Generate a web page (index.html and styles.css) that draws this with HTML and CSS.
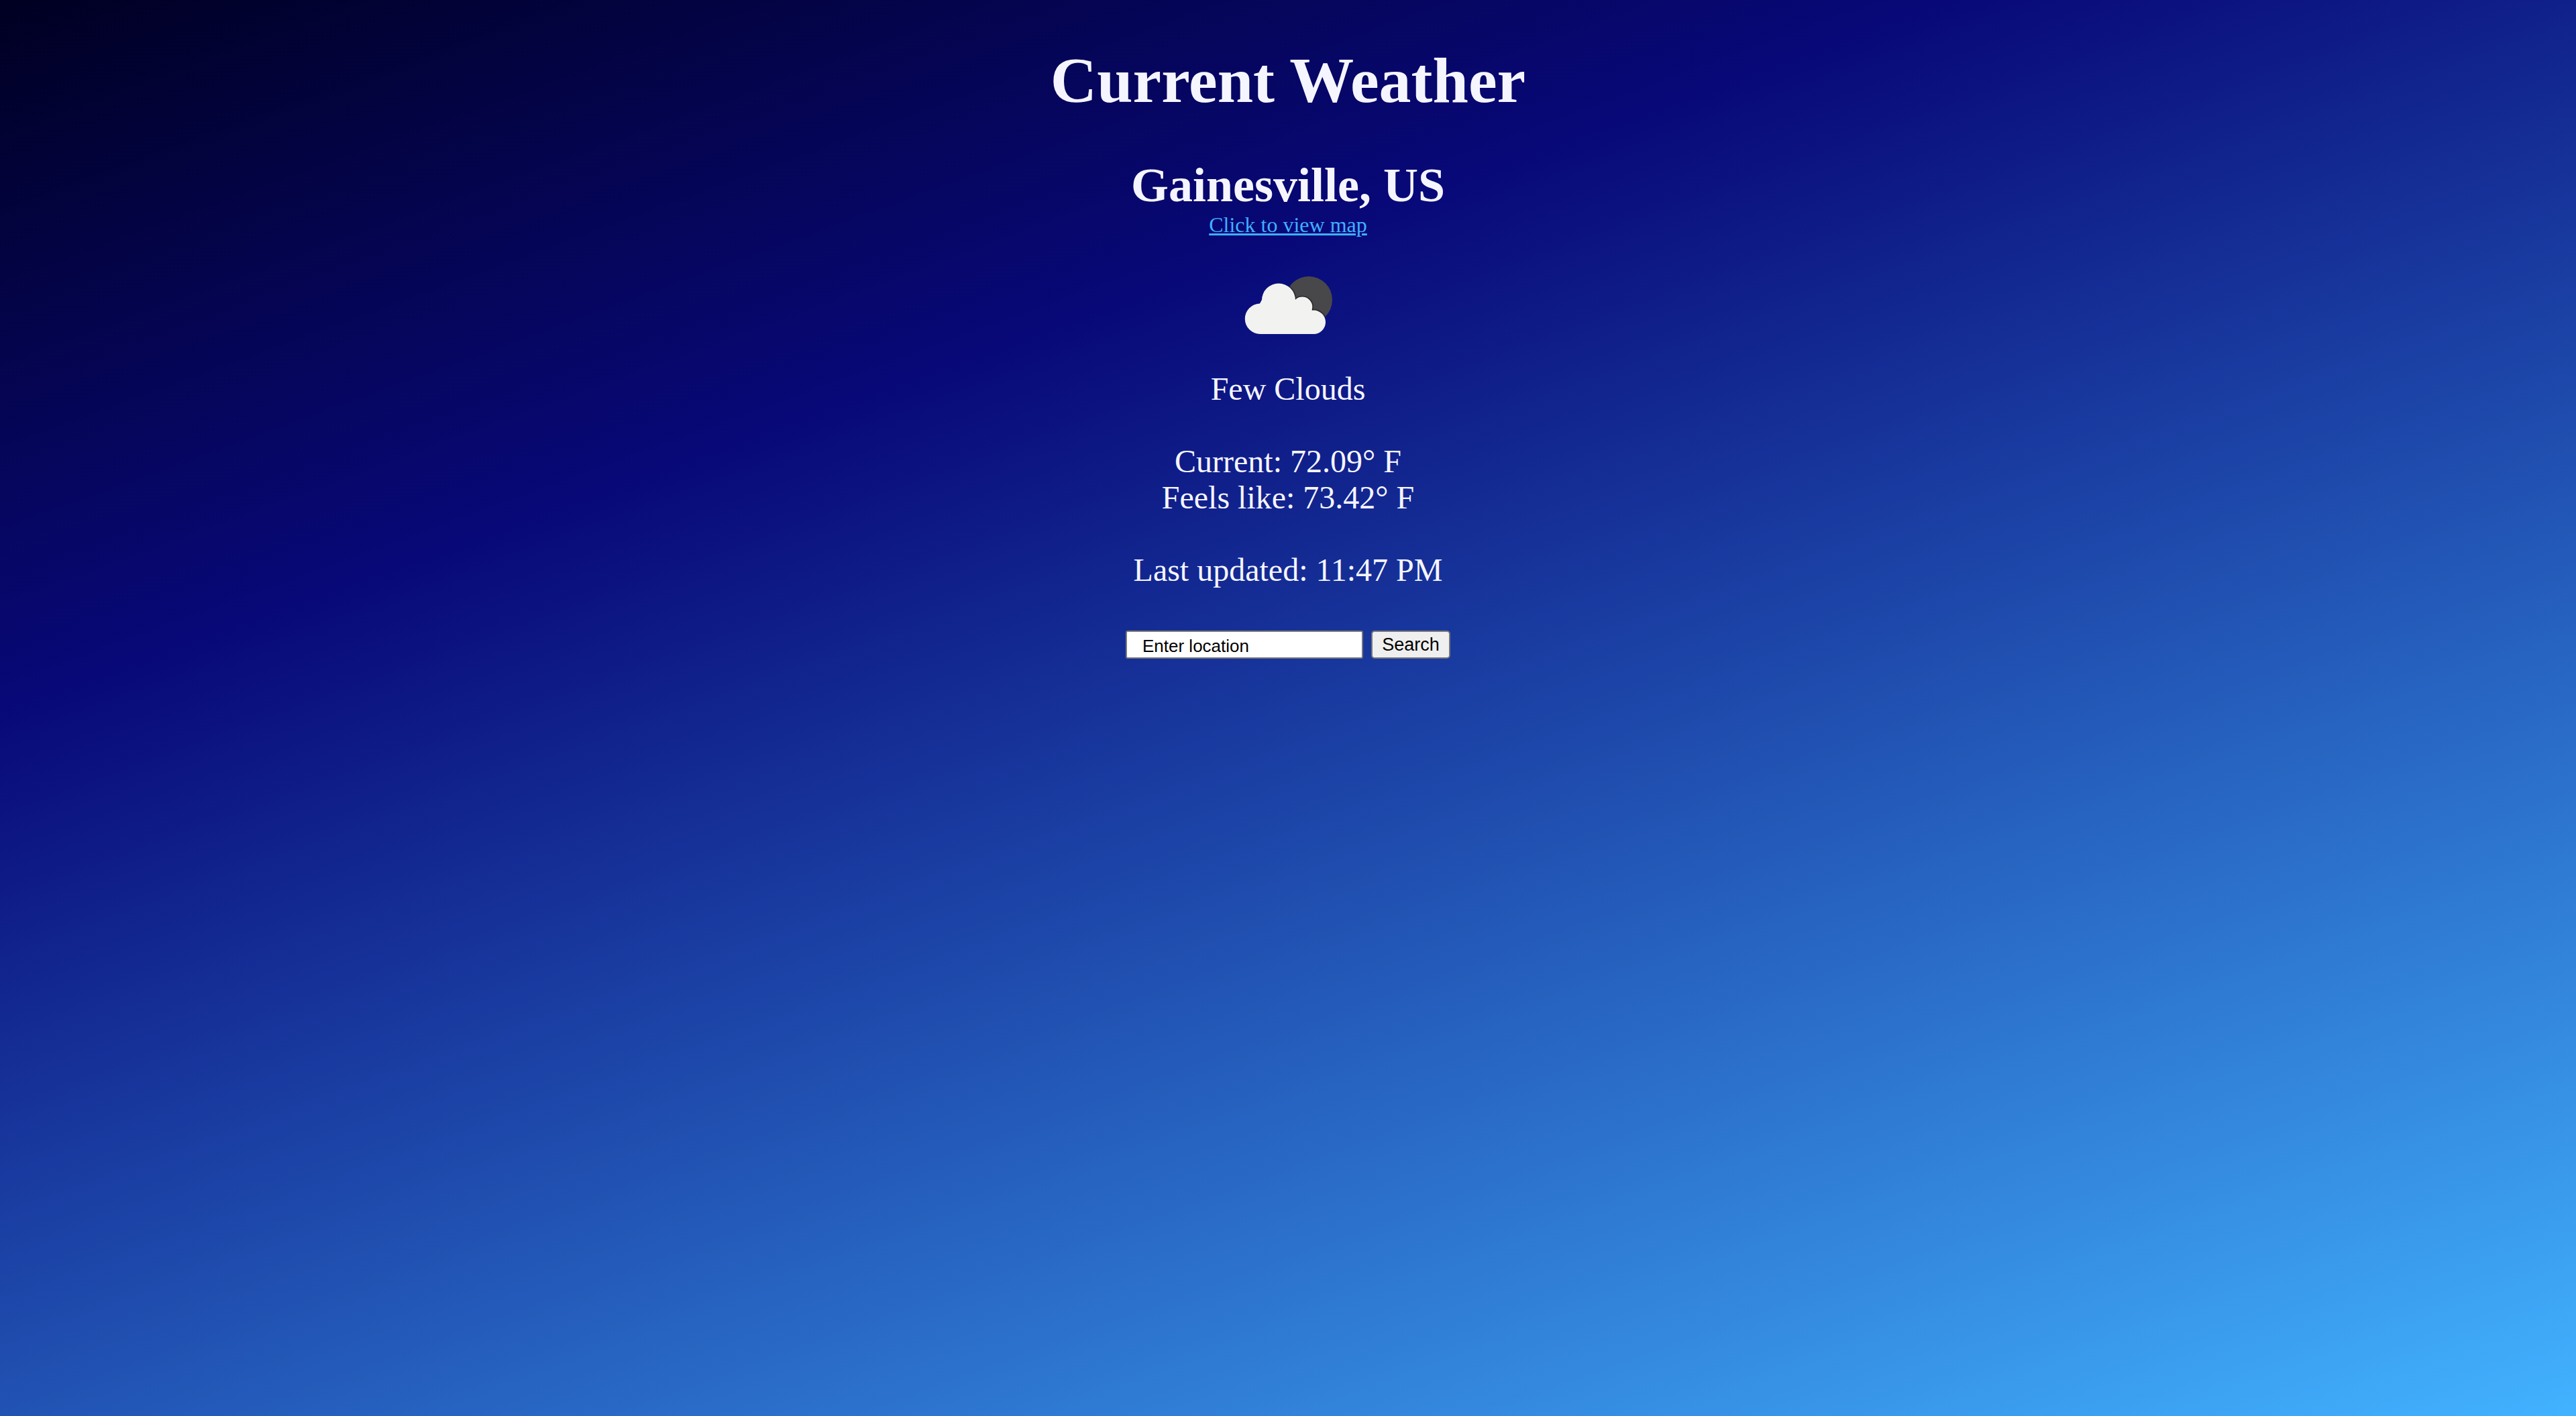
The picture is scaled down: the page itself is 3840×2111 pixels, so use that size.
FILE: index.html
```html
<!DOCTYPE html>
<html lang="en">
<head>
  <meta charset="utf-8">
  <meta name="viewport" content="width=device-width, initial-scale=1">
  <title>Current Weather</title>
  <link rel="stylesheet" href="styles.css">
</head>
<body>
  <main class="weather">
    <h1 class="title">Current Weather</h1>
    <h2 class="city">Gainesville, US</h2>
    <a class="map-link" href="#map">Click to view map</a>
    <svg class="icon" viewBox="0 0 200 200" role="img" aria-label="Few clouds, night">
      <defs>
        <clipPath id="moon"><circle cx="131" cy="94" r="35"/></clipPath>
        <g id="cloud">
          <circle cx="58.500" cy="122.300" r="22.700"/>
          <circle cx="86" cy="94.500" r="25"/>
          <circle cx="121.300" cy="104.500" r="15"/>
          <circle cx="138.300" cy="127.300" r="17.700"/>
          <path d="M58 99.600L61 94H111L136 109.600L138 145H58Z"/>
        </g>
      </defs>
      <circle cx="131" cy="94" r="35" fill="#48484a"/>
      <use href="#cloud" fill="none" stroke="#1c1c1c" stroke-opacity=".75" stroke-width="3" clip-path="url(#moon)"/>
      <use href="#cloud" fill="#f2f2f1"/>
    </svg>
    <p class="line">Few Clouds</p>
    <p class="line">Current: 72.09° F<br>Feels like: 73.42° F</p>
    <p class="line">Last updated: 11:47 PM</p>
    <form class="search" action="#">
      <input class="search-input" type="text" name="location" placeholder="Enter location" aria-label="Location">
      <button class="search-button" type="submit">Search</button>
    </form>
  </main>
</body>
</html>
```
FILE: styles.css
```css
* {
  box-sizing: border-box;
}

body {
  min-height: 100vh;
  margin: 0;
  background: linear-gradient(160deg, #000022, #080878 30%, #2255b5 61%, #42b2ff);
  color: #f5f5ff;
  font-family: "Liberation Serif", "Times New Roman", serif;
}

.weather {
  display: flex;
  flex-direction: column;
  align-items: center;
  padding: 65px 16px;
  text-align: center;
}

.title {
  margin: 0 0 60px;
  font-size: 96px;
  line-height: 110px;
}

.city {
  margin: 0;
  font-size: 72px;
  line-height: 82px;
}

.map-link {
  color: #40b0ff;
  font-size: 32px;
  line-height: 36px;
}

.icon {
  width: 200px;
  height: 200px;
}

.line {
  margin: 0 0 54px;
  font-size: 48px;
  line-height: 54px;
}

.search {
  display: flex;
  gap: 12px;
  margin-top: 9px;
}

.search-input,
.search-button {
  height: 42px;
  border: 2px solid #767676;
  border-radius: 5px;
  color: #000;
  font-family: "Liberation Sans", Arial, sans-serif;
}

.search-input {
  width: 354px;
  padding: 4px 2px 0 23px;
  border-radius: 3px;
  background: #fff;
  font-size: 26px;
}

.search-input::placeholder {
  color: #000;
  opacity: 1;
}

.search-button {
  width: 118px;
  padding: 0;
  background: #efefef;
  font-size: 27px;
  line-height: 36px;
}
```
